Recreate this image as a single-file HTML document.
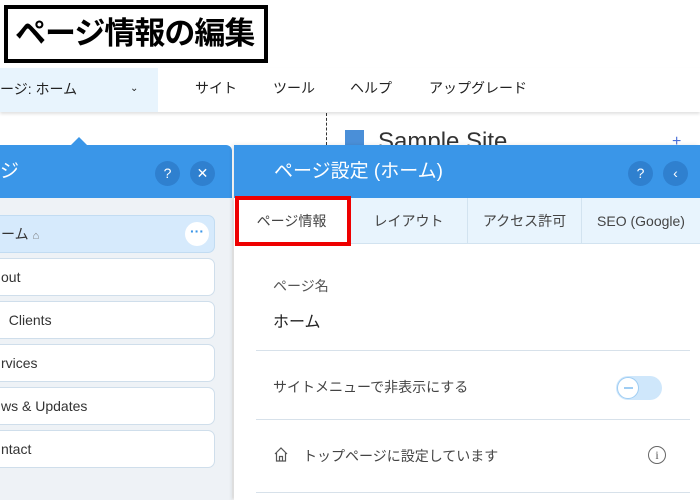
<!DOCTYPE html><html><head><meta charset="utf-8"><style>
*{margin:0;padding:0;box-sizing:border-box}
body{width:700px;height:500px;overflow:hidden;background:#fff;position:relative;font-family:"Liberation Sans","Noto Sans CJK JP",sans-serif;color:#333}
.a{position:absolute}
.title{left:4px;top:5px;width:264px;height:58px;border:4px solid #000;background:#fff;font-weight:bold;font-size:31px;line-height:50px;padding-left:7px;color:#000;letter-spacing:-1px}
.bar{left:0;top:68px;width:700px;height:44px;background:#fff;box-shadow:0 2px 3px rgba(0,0,0,.12)}
.menu{top:78px;font-size:14px;color:#222}
.circ{width:25px;height:25px;border-radius:50%;background:#2f80cf;color:#fff;font-size:14px;text-align:center;line-height:25px}
.item{left:-10px;width:225px;height:38px;background:#fff;border:1px solid #cfdeeb;border-radius:7px;font-size:14px;line-height:36px;padding-left:10px;color:#333}
.tab{top:198px;height:46px;font-size:14px;color:#444;text-align:center;line-height:46px;border-right:1px solid #d2e3f0}
.line{left:256px;width:434px;height:1px;background:#d7e1ea}
</style></head><body>
<div class="a title">ページ情報の編集</div>
<div class="a bar"></div>
<div class="a" style="left:0;top:68px;width:158px;height:44px;background:#e8f4fd;font-size:14px;line-height:42px;padding-left:0;color:#222">ージ: ホーム<span style="position:absolute;left:130px;font-size:10px">&#8964;</span></div>
<div class="a menu" style="left:195px">サイト</div>
<div class="a menu" style="left:273px">ツール</div>
<div class="a menu" style="left:350px">ヘルプ</div>
<div class="a menu" style="left:429px">アップグレード</div>
<div class="a" style="left:326px;top:113px;height:32px;border-left:1px dashed #333"></div>
<div class="a" style="left:345px;top:130px;width:19px;height:19px;background:#4a8fd8"></div>
<div class="a" style="left:378px;top:128px;font-size:24px;color:#333">Sample Site</div>
<div class="a" style="left:672px;top:133px;font-size:16px;color:#4a6fd8">+</div>
<!-- left panel -->
<div class="a" style="left:0;top:198px;width:232px;height:302px;background:#eef2f6;box-shadow:2px 0 4px rgba(0,0,0,.1)"></div>
<div class="a" style="left:0;top:145px;width:232px;height:53px;background:#3a96e8;color:#fff;font-size:19px;line-height:53px;border-top-right-radius:6px">ジ</div>
<div class="a" style="left:71px;top:137px;width:0;height:0;border-left:8px solid transparent;border-right:8px solid transparent;border-bottom:8px solid #3a96e8"></div>
<div class="a circ" style="left:155px;top:161px">?</div>
<div class="a circ" style="left:190px;top:161px">✕</div>
<div class="a item" style="top:215px;background:#d6eafc;border-color:#c2dcf2">ーム <span style="font-size:11px;color:#777">⌂</span></div>
<div class="a" style="left:185px;top:222px;width:24px;height:24px;border-radius:50%;background:#fff;color:#3a96e8;text-align:center;line-height:18px;font-size:14px;font-weight:bold">···</div>
<div class="a item" style="top:258px">out</div>
<div class="a item" style="top:301px">&nbsp;&nbsp;Clients</div>
<div class="a item" style="top:344px">rvices</div>
<div class="a item" style="top:387px">ws &amp; Updates</div>
<div class="a item" style="top:430px">ntact</div>
<!-- right panel -->
<div class="a" style="left:234px;top:145px;width:466px;height:355px;background:#fff;box-shadow:-2px 0 4px rgba(0,0,0,.1)"></div>
<div class="a" style="left:234px;top:145px;width:466px;height:53px;background:#3a96e8;color:#fff;font-size:19px;line-height:53px;padding-left:40px">ページ設定 (ホーム)</div>
<div class="a circ" style="left:628px;top:161px">?</div>
<div class="a circ" style="left:663px;top:161px">‹</div>
<div class="a" style="left:234px;top:198px;width:466px;height:46px;background:#e8f4fd;border-bottom:1px solid #d2e3f0"></div>
<div class="a tab" style="left:234px;width:116px;background:#fff">ページ情報</div>
<div class="a tab" style="left:350px;width:118px">レイアウト</div>
<div class="a tab" style="left:468px;width:114px">アクセス許可</div>
<div class="a tab" style="left:582px;width:118px;border:none">SEO (Google)</div>
<div class="a" style="left:235px;top:196px;width:116px;height:50px;border:4px solid #e00"></div>
<div class="a" style="left:273px;top:276px;font-size:14px;color:#555">ページ名</div>
<div class="a" style="left:273px;top:308px;font-size:16px;color:#222">ホーム</div>
<div class="a line" style="top:350px"></div>
<div class="a" style="left:273px;top:377px;font-size:14px;color:#444">サイトメニューで非表示にする</div>
<div class="a" style="left:616px;top:376px;width:46px;height:24px;border-radius:12px;background:#cfe7fb"></div>
<div class="a" style="left:617px;top:377px;width:22px;height:22px;border-radius:50%;background:#fff;border:1px solid #9fcdf3"><div style="margin:9px auto 0;width:9px;height:2px;background:#9fcdf3"></div></div>
<div class="a line" style="top:419px"></div>
<svg class="a" style="left:273px;top:446px" width="16" height="17" viewBox="0 0 16 17"><path d="M2 8 L8 2 L14 8 M3.5 7 V15 H12.5 V7 M6.5 15 V10.5 H9.5 V15" fill="none" stroke="#555" stroke-width="1.2"/></svg>
<div class="a" style="left:303px;top:446px;font-size:14px;color:#444">トップページに設定しています</div>
<div class="a" style="left:648px;top:446px;width:18px;height:18px;border-radius:50%;border:1px solid #666;text-align:center;font-size:12px;line-height:16px;color:#555;font-family:'Liberation Serif',serif">i</div>
<div class="a line" style="top:492px"></div>
</body></html>
